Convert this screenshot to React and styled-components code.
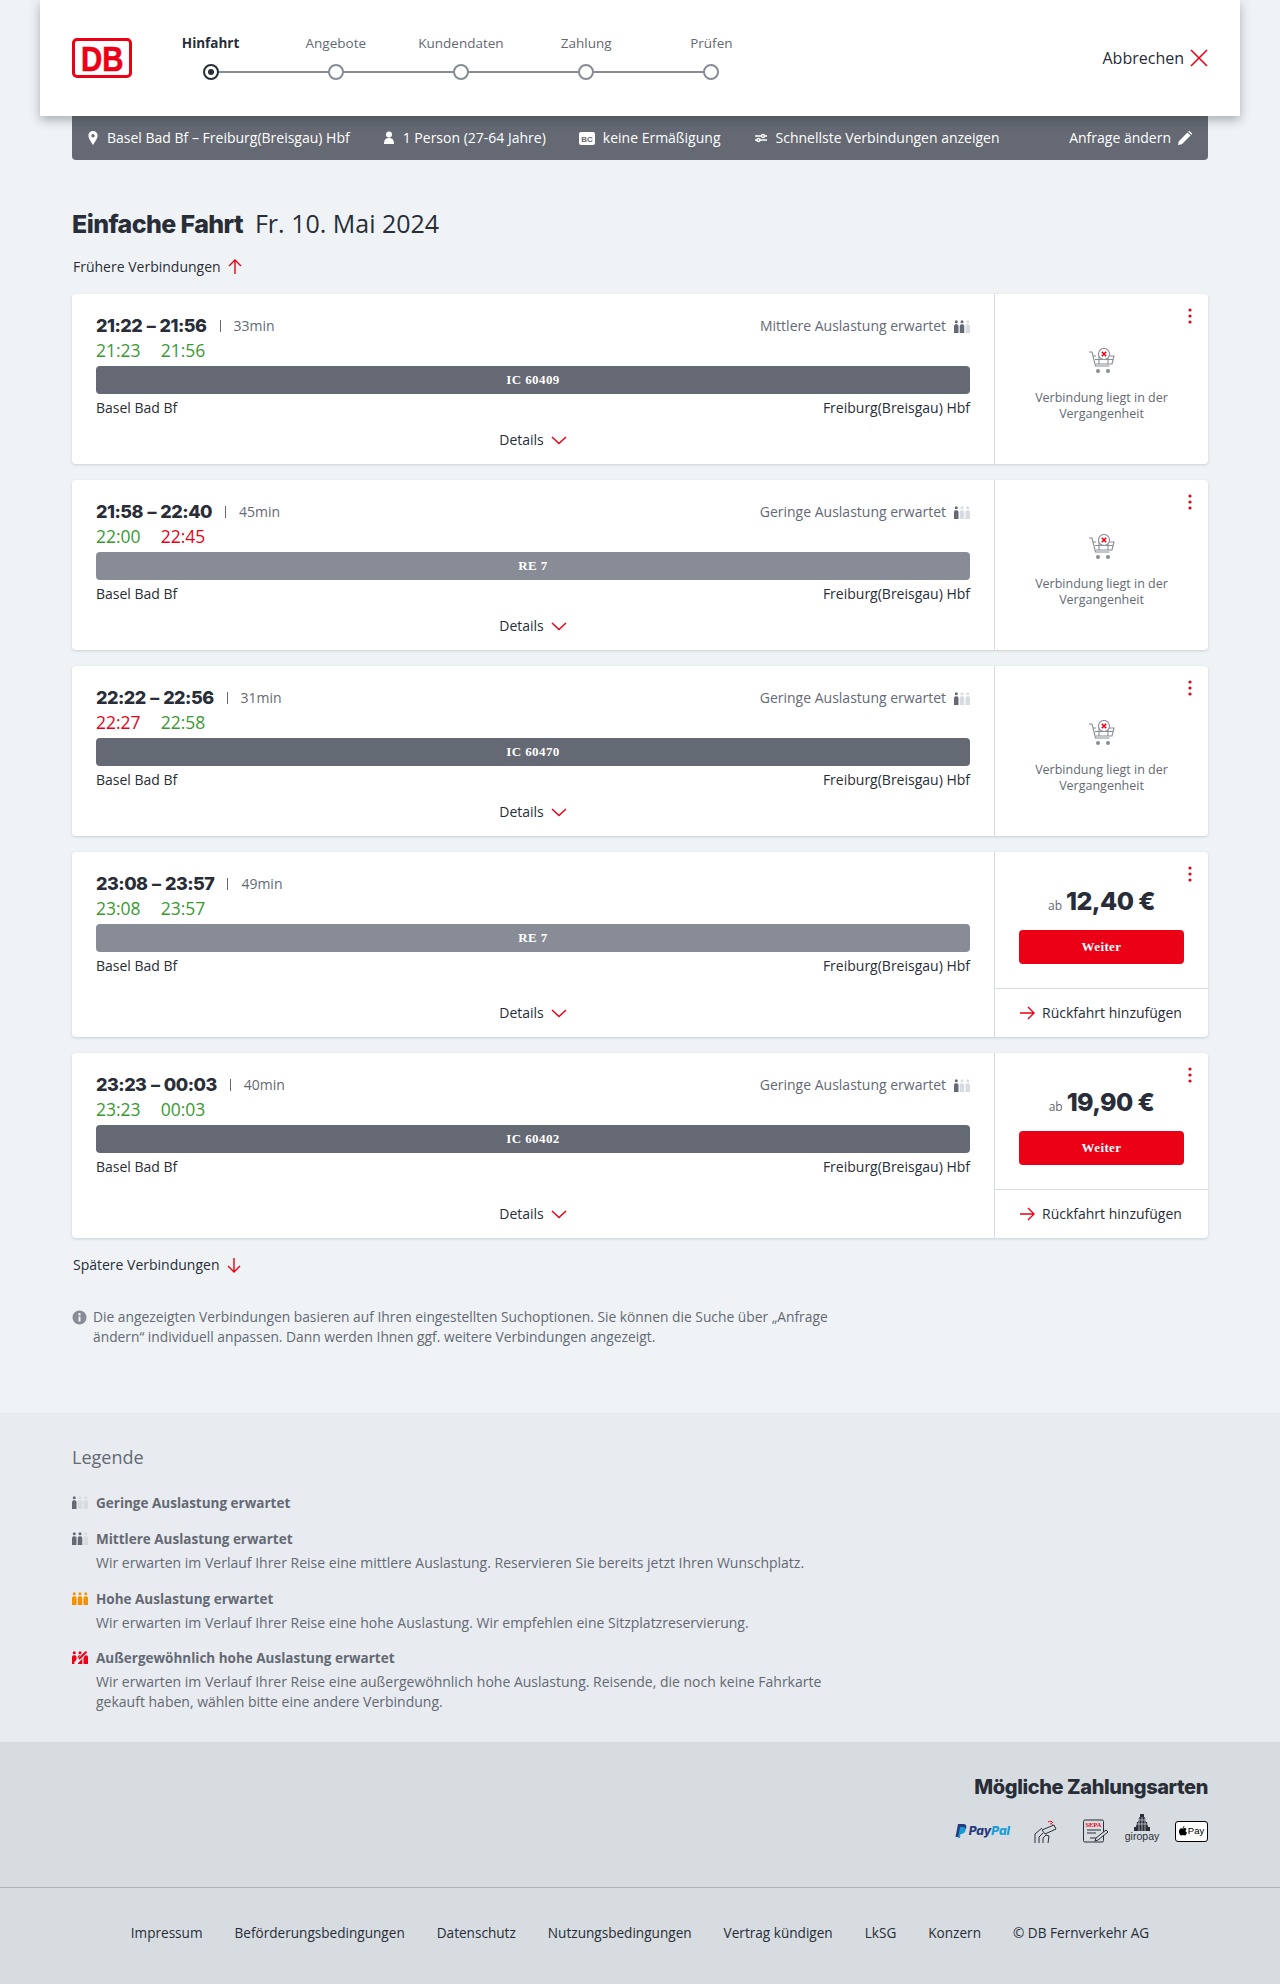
import React from "react"
import styled, { createGlobalStyle } from "styled-components"

const sans = `"Open Sans", "Noto Sans", sans-serif`
const heavy = `"Inter", "Noto Sans", sans-serif`
const slab = `"Liberation Serif", serif`

const GlobalStyle = createGlobalStyle`
  html, body { margin: 0; padding: 0; }
  body { background: #eff3f6; color: #282d37; font-family: ${sans}; font-size: 14px; line-height: 20px; }
  * { box-sizing: border-box; }
`

const Page = styled.div`
  width: 1280px;
  height: 1984px;
  overflow: hidden;
  display: flex;
  flex-direction: column;
`
const Header = styled.header`
  position: relative;
  z-index: 2;
  margin: 0 40px;
  height: 116px;
  background: #fff;
  box-shadow: 0 4px 10px rgba(40, 45, 55, 0.35);
  display: flex;
  align-items: center;
  padding: 0 32px;
`
const Logo = styled.div`
  width: 60px;
  height: 40px;
  border: 3.5px solid #ec0016;
  border-radius: 5px;
  display: flex;
  align-items: center;
  justify-content: center;
  color: #ec0016;

  span {
    font: 700 35px/1 "Liberation Sans", sans-serif;
    -webkit-text-stroke: 0.6px #ec0016;
    transform: scaleX(0.84);
  }
`
const Stepper = styled.ol`
  list-style: none;
  margin: 0 0 0 16px;
  padding: 0;
  display: flex;
`
const Step = styled.li`
  position: relative;
  width: 125.2px;
  height: 50px;
  text-align: center;
  font-size: 13.5px;
  line-height: 20px;
  font-weight: ${(p) => (p.$active ? 700 : 400)};
  color: ${(p) => (p.$active ? "#282d37" : "#646973")};

  &:not(:last-child)::before {
    content: "";
    position: absolute;
    left: 50%;
    width: 100%;
    top: 38px;
    height: 2px;
    background: #878c96;
  }
`
const StepDot = styled.span`
  position: absolute;
  left: 50%;
  top: 31px;
  width: 16px;
  height: 16px;
  margin-left: -8px;
  border-radius: 50%;
  background: #fff;
  border: 2px solid ${(p) => (p.$active ? "#282d37" : "#878c96")};

  &::after {
    content: "";
    display: ${(p) => (p.$active ? "block" : "none")};
    width: 6px;
    height: 6px;
    margin: 3px;
    border-radius: 50%;
    background: #282d37;
  }
`
const Cancel = styled.div`
  margin-left: auto;
  display: flex;
  align-items: center;
  gap: 6px;
  font-size: 16px;
  color: #282d37;
`
const Main = styled.main`
  padding: 0 72px;
  flex: 1;
`
const Summary = styled.div`
  height: 44px;
  background: #646973;
  border-radius: 0 0 4px 4px;
  color: #fff;
  font-size: 14px;
  display: flex;
  align-items: center;
  padding: 0 15px;
  gap: 33px;
`
const SummaryItem = styled.div`
  display: flex;
  align-items: center;
  gap: 8px;
`
const Change = styled(SummaryItem)`
  margin-left: auto;
  gap: 6px;
`
const Heading = styled.h1`
  margin: 47px 0 0;
  font-size: 25px;
  line-height: 32px;
  font-weight: 400;
  color: #282d37;

  strong {
    font-family: ${heavy};
    font-weight: 800;
    font-size: 25px;
    letter-spacing: -0.6px;
    margin-right: 12px;
  }
`
const MoreLink = styled.div`
  display: flex;
  align-items: center;
  gap: 6px;
  height: 20px;
  font-size: 14px;
  margin: ${(p) => p.$margin};
  padding-left: 1px;
`
const CardList = styled.div`
  display: flex;
  flex-direction: column;
  gap: 16px;
`
const Card = styled.article`
  position: relative;
  background: #fff;
  border-radius: 4px;
  box-shadow: 0 1px 3px rgba(40, 45, 55, 0.18);
  display: grid;
  grid-template-columns: 1fr 214px;
  min-height: 170px;
`
const Journey = styled.div`
  padding: 20px 24px 0;
  display: flex;
  flex-direction: column;
`
const TopRow = styled.div`
  display: flex;
  align-items: center;
  height: 24px;
`
const Times = styled.span`
  font-family: ${heavy};
  font-weight: 800;
  font-size: 18px;
  letter-spacing: -0.5px;
  word-spacing: 1px;
  color: #282d37;
`
const Duration = styled.span`
  color: #646973;
  font-size: 14px;
  margin-left: 13px;
  padding-left: 14px;
  position: relative;

  &::before {
    content: "";
    position: absolute;
    left: 0;
    top: 4px;
    width: 1px;
    height: 12px;
    background: #646973;
  }
`
const Load = styled.span`
  margin-left: auto;
  display: flex;
  align-items: center;
  gap: 8px;
  color: #646973;
  font-size: 14px;
`
const RealRow = styled.div`
  display: flex;
  gap: 20px;
  height: 24px;
  font-size: 17.5px;
  line-height: 24px;
`
const RealTime = styled.span`
  color: ${(p) => (p.$late ? "#ec0016" : "#3a9a32")};
`
const TrainBar = styled.div`
  height: 28px;
  margin-top: 4px;
  border-radius: 4px;
  background: ${(p) => (p.$light ? "#878c96" : "#646973")};
  color: #fff;
  font: 700 13px/28px ${slab};
  letter-spacing: 0.4px;
  text-align: center;
`
const Stations = styled.div`
  display: flex;
  justify-content: space-between;
  margin-top: 4px;
  height: 20px;
  font-size: 14px;
`
const Details = styled.div`
  margin-top: auto;
  height: 46px;
  padding-bottom: 2px;
  display: flex;
  align-items: center;
  justify-content: center;
  gap: 7px;
  font-size: 14px;
`
const Side = styled.aside`
  position: relative;
  border-left: 1px solid #d7dce1;
  display: flex;
  flex-direction: column;
`
const Kebab = styled.svg`
  position: absolute;
  right: 16px;
  top: 14px;
`
const Past = styled.div`
  flex: 1;
  display: flex;
  flex-direction: column;
  align-items: center;
  padding-top: 54px;
  text-align: center;
  color: #646973;
  font-size: 12.5px;
  line-height: 16px;

  p {
    margin: 14px 0 0;
    width: 150px;
  }
`
const Offer = styled.div`
  height: 136px;
  padding: 27px 24px 0;
  display: flex;
  flex-direction: column;
  align-items: center;
`
const Price = styled.div`
  display: flex;
  align-items: baseline;
  justify-content: center;
  gap: 4px;
  height: 44px;
  color: #282d37;
  font: 800 25px/44px ${heavy};
  letter-spacing: -0.6px;

  small {
    font: 400 12px ${sans};
    color: #646973;
    letter-spacing: 0;
  }
`
const Continue = styled.div`
  width: 165px;
  height: 34px;
  margin-top: 7px;
  border-radius: 4px;
  background: #ec0016;
  color: #fff;
  font: 700 13px/34px ${slab};
  letter-spacing: 0.4px;
  text-align: center;
`
const Return = styled.div`
  height: 49px;
  border-top: 1px solid #d7dce1;
  display: flex;
  align-items: center;
  gap: 7px;
  padding-left: 24px;
  font-size: 14px;
`
const Notice = styled.div`
  margin-top: 32px;
  width: 770px;
  display: flex;
  gap: 6px;
  font-size: 13.8px;
  color: #646973;

  svg { flex: none; margin-top: 3px; }
`
const Legend = styled.section`
  background: #e8ebf0;
  height: 329px;
  padding: 32px 72px 0;
  color: #646973;
`
const LegendTitle = styled.h2`
  margin: 0 0 24px;
  font-size: 18px;
  line-height: 24px;
  font-weight: 400;
`
const LegendItem = styled.div`
  display: grid;
  grid-template-columns: 24px 760px;
  margin-bottom: ${(p) => p.$gap}px;

  svg { margin-top: 3px; }
  b { display: block; font-size: 13.5px; line-height: 20px; font-weight: 700; }
  p { margin: 4px 0 0; font-size: 14px; line-height: 20px; width: 740px; }
`
const Payments = styled.section`
  background: #d7dce1;
  height: 146px;
  padding: 32px 72px 0;
  display: flex;
  flex-direction: column;
  align-items: flex-end;
  border-bottom: 1px solid #afb4bb;
`
const PaymentTitle = styled.h2`
  margin: 0;
  font: 800 20px/26px ${heavy};
  letter-spacing: -0.4px;
  color: #282d37;
`
const PaymentRow = styled.div`
  margin-top: 18px;
  display: flex;
  align-items: center;
`
const PayItem = styled.div`
  display: flex;
  margin-right: ${(p) => p.$after || 0}px;
`
const PayPal = styled(PayItem)`
  align-items: center;
  gap: 2px;
  font: italic 800 12px/1 ${heavy};
  color: #253b80;

  i { color: #179bd7; font-style: inherit; }
`
const Giro = styled(PayItem)`
  flex-direction: column;
  align-items: center;
  margin-top: -6px;
  font: 400 10.5px/11px "Liberation Sans", sans-serif;
  color: #282d37;
  width: 34px;
`
const ApplePay = styled.div`
  width: 33px;
  height: 21px;
  background: #fff;
  border: 1px solid #000;
  border-radius: 3px;
  display: flex;
  align-items: center;
  justify-content: center;
  font: 500 9.5px/1 "Liberation Sans", sans-serif;
  color: #000;
  gap: 1px;
`
const Footer = styled.footer`
  background: #d7dce1;
  height: 96px;
  padding-top: 35px;
  display: flex;
  justify-content: center;
  gap: 32px;
  font-size: 13.6px;
  color: #282d37;
`

const Arrow = ({ dir }) => {
  const rot = { up: -90, down: 90, right: 0 }[dir]
  return (
    <svg width="16" height="16" viewBox="0 0 16 16" fill="none" stroke="#ec0016" strokeWidth="1.4" style={{ transform: `rotate(${rot}deg)` }}>
      <path d="M1 8h14M9 2l6 6-6 6" />
    </svg>
  )
}

const Chevron = () => (
  <svg width="16" height="10" viewBox="0 0 16 10" fill="none" stroke="#ec0016" strokeWidth="1.5">
    <path d="M1 2l7 6.5L15 2" />
  </svg>
)

const person = (x, color) => (
  <g fill={color} key={x}>
    <circle cx={x + 2.250} cy="1.800" r="1.500" />
    <path d={`M${x} 6a1.800 1.800 0 0 1 1.800-1.800h.9A1.800 1.800 0 0 1 ${x + 4.500} 6V13h-4.500z`} />
  </g>
)

// level: 1-3 filled people, colour by level
const Occupancy = ({ level, color = "#646973" }) => (
  <svg width="16" height="13" viewBox="0 0 16 13">
    {[0, 5.750, 11.500].map((x, i) => person(x, i < level ? color : "#d7dce1"))}
  </svg>
)

const OccupancyFull = () => (
  <svg width="16" height="13" viewBox="0 0 16 13">
    {[0, 5.750, 11.500].map((x) => person(x, "#ec0016"))}
    <path d="M3 13L14 1" stroke="#e8ebf0" strokeWidth="3.500" />
    <path d="M7 8l7-7" stroke="#ec0016" strokeWidth="2" />
  </svg>
)

const Cart = () => (
  <svg width="28" height="28" viewBox="0 0 28 28" fill="none" stroke="#878c96" strokeWidth="1.100">
    <path d="M1 4h3l3.500 14h14" />
    <path d="M5 8h3M20 8h6l-2 8H8" />
    <path d="M7 11.500h18M11 8v8M20 8v8" />
    <circle cx="16" cy="6" r="5.500" fill="#fff" />
    <path d="M13.800 3.800l4.400 4.400M18.200 3.800l-4.400 4.400" stroke="#ec0016" strokeWidth="1.600" />
    <circle cx="10" cy="23" r="2" fill="#878c96" stroke="none" />
    <circle cx="20" cy="23" r="2" fill="#878c96" stroke="none" />
  </svg>
)

const connections = [
  { times: "21:22 – 21:56", dur: "33min", dep: ["21:23"], arr: ["21:56"], train: "IC 60409", load: "Mittlere", level: 2, past: true },
  { times: "21:58 – 22:40", dur: "45min", dep: ["22:00"], arr: ["22:45", true], train: "RE 7", light: true, load: "Geringe", level: 1, past: true },
  { times: "22:22 – 22:56", dur: "31min", dep: ["22:27", true], arr: ["22:58"], train: "IC 60470", load: "Geringe", level: 1, past: true },
  { times: "23:08 – 23:57", dur: "49min", dep: ["23:08"], arr: ["23:57"], train: "RE 7", light: true, price: "12,40 €" },
  { times: "23:23 – 00:03", dur: "40min", dep: ["23:23"], arr: ["00:03"], train: "IC 60402", load: "Geringe", level: 1, price: "19,90 €" },
]

const Connection = ({ c }) => (
  <Card>
    <Journey>
      <TopRow>
        <Times>{c.times}</Times>
        <Duration>{c.dur}</Duration>
        {c.load && (
          <Load>
            {c.load} Auslastung erwartet
            <Occupancy level={c.level} />
          </Load>
        )}
      </TopRow>
      <RealRow>
        <RealTime $late={c.dep[1]}>{c.dep[0]}</RealTime>
        <RealTime $late={c.arr[1]}>{c.arr[0]}</RealTime>
      </RealRow>
      <TrainBar $light={c.light}>{c.train}</TrainBar>
      <Stations>
        <span>Basel Bad Bf</span>
        <span>Freiburg(Breisgau) Hbf</span>
      </Stations>
      <Details>
        Details
        <Chevron />
      </Details>
    </Journey>
    <Side>
      <Kebab width="4" height="16" viewBox="0 0 4 16" fill="#ec0016">
        <circle cx="2" cy="2" r="1.600" />
        <circle cx="2" cy="8" r="1.600" />
        <circle cx="2" cy="14" r="1.600" />
      </Kebab>
      {c.past ? (
        <Past>
          <Cart />
          <p>Verbindung liegt in der Vergangenheit</p>
        </Past>
      ) : (
        <>
          <Offer>
            <Price>
              <small>ab</small>
              {c.price}
            </Price>
            <Continue>Weiter</Continue>
          </Offer>
          <Return>
            <Arrow dir="right" />
            Rückfahrt hinzufügen
          </Return>
        </>
      )}
    </Side>
  </Card>
)

const steps = ["Hinfahrt", "Angebote", "Kundendaten", "Zahlung", "Prüfen"]
const footerLinks = ["Impressum", "Beförderungsbedingungen", "Datenschutz", "Nutzungsbedingungen", "Vertrag kündigen", "LkSG", "Konzern", "© DB Fernverkehr AG"]

const App = () => (
  <Page>
    <GlobalStyle />
    <Header>
      <Logo>
        <span>DB</span>
      </Logo>
      <Stepper>
        {steps.map((s, i) => (
          <Step key={s} $active={i === 0}>
            {s}
            <StepDot $active={i === 0} />
          </Step>
        ))}
      </Stepper>
      <Cancel>
        Abbrechen
        <svg width="18" height="18" viewBox="0 0 18 18" fill="none" stroke="#ec0016" strokeWidth="1.600">
          <path d="M1 1l16 16M17 1L1 17" />
        </svg>
      </Cancel>
    </Header>
    <Main>
      <Summary>
        <SummaryItem>
          <svg width="12" height="16" viewBox="0 0 12 16" fill="#fff">
            <path fillRule="evenodd" d="M6 1a4.600 4.600 0 0 0-4.600 4.600C1.400 9 6 15 6 15s4.600-6 4.600-9.400A4.600 4.600 0 0 0 6 1zm0 3a1.700 1.700 0 1 1 0 3.400A1.700 1.700 0 0 1 6 4z" />
          </svg>
          Basel Bad Bf – Freiburg(Breisgau) Hbf
        </SummaryItem>
        <SummaryItem>
          <svg width="12" height="14" viewBox="0 0 12 14" fill="#fff">
            <circle cx="6" cy="3.500" r="3" />
            <path d="M1 13c0-4 1.500-6 5-6s5 2 5 6z" />
          </svg>
          1 Person (27-64 Jahre)
        </SummaryItem>
        <SummaryItem>
          <svg width="16" height="13" viewBox="0 0 16 13">
            <rect width="16" height="13" rx="2" fill="#fff" />
            <text x="8" y="9.500" textAnchor="middle" fontSize="8" fontWeight="700" fontFamily="Liberation Sans" fill="#646973">BC</text>
          </svg>
          keine Ermäßigung
        </SummaryItem>
        <SummaryItem>
          <svg width="14" height="12" viewBox="0 0 14 12" fill="none" stroke="#fff" strokeWidth="1.400">
            <path d="M1 4h12M1 8h12" />
            <circle cx="9" cy="4" r="1.500" fill="#646973" />
            <circle cx="4.500" cy="8" r="1.500" fill="#646973" />
          </svg>
          Schnellste Verbindungen anzeigen
        </SummaryItem>
        <Change>
          Anfrage ändern
          <svg width="16" height="16" viewBox="0 0 16 16" fill="#fff">
            <path d="M1 15l.8-3.800L10.500 2.500l3 3L4.800 14.200zM11.300 1.700l1-1 3 3-1 1z" />
          </svg>
        </Change>
      </Summary>
      <Heading>
        <strong>Einfache Fahrt</strong>Fr. 10. Mai 2024
      </Heading>
      <MoreLink $margin="17px 0 17px">
        Frühere Verbindungen
        <Arrow dir="up" />
      </MoreLink>
      <CardList>
        {connections.map((c) => (
          <Connection key={c.times} c={c} />
        ))}
      </CardList>
      <MoreLink $margin="17px 0 0">
        Spätere Verbindungen
        <Arrow dir="down" />
      </MoreLink>
      <Notice>
        <svg width="15" height="15" viewBox="0 0 15 15">
          <circle cx="7.500" cy="7.500" r="7" fill="#878c96" />
          <rect x="6.500" y="6.500" width="2" height="5" fill="#eff3f6" />
          <circle cx="7.500" cy="4.300" r="1.200" fill="#eff3f6" />
        </svg>
        <span>
          Die angezeigten Verbindungen basieren auf Ihren eingestellten Suchoptionen. Sie können die Suche über „Anfrage
          ändern“ individuell anpassen. Dann werden Ihnen ggf. weitere Verbindungen angezeigt.
        </span>
      </Notice>
    </Main>
    <Legend>
      <LegendTitle>Legende</LegendTitle>
      <LegendItem $gap={16}>
        <Occupancy level={1} />
        <b>Geringe Auslastung erwartet</b>
      </LegendItem>
      <LegendItem $gap={16}>
        <Occupancy level={2} />
        <div>
          <b>Mittlere Auslastung erwartet</b>
          <p>Wir erwarten im Verlauf Ihrer Reise eine mittlere Auslastung. Reservieren Sie bereits jetzt Ihren Wunschplatz.</p>
        </div>
      </LegendItem>
      <LegendItem $gap={15}>
        <Occupancy level={3} color="#f39200" />
        <div>
          <b>Hohe Auslastung erwartet</b>
          <p>Wir erwarten im Verlauf Ihrer Reise eine hohe Auslastung. Wir empfehlen eine Sitzplatzreservierung.</p>
        </div>
      </LegendItem>
      <LegendItem $gap={0}>
        <OccupancyFull />
        <div>
          <b>Außergewöhnlich hohe Auslastung erwartet</b>
          <p>
            Wir erwarten im Verlauf Ihrer Reise eine außergewöhnlich hohe Auslastung. Reisende, die noch keine Fahrkarte
            gekauft haben, wählen bitte eine andere Verbindung.
          </p>
        </div>
      </LegendItem>
    </Legend>
    <Payments>
      <PaymentTitle>Mögliche Zahlungsarten</PaymentTitle>
      <PaymentRow>
        <PayPal $after={23}>
          <svg width="12" height="14" viewBox="0 0 12 14">
            <path d="M3 0h5c3 0 4 2 3 4.500S8 8 6 8H4.500L3.700 13H0.500z" fill="#253b80" />
            <path d="M5 3h3c2 0 3 1.500 2.500 3.500S8 10 6.500 10H5.500L5 14H3z" fill="#179bd7" />
          </svg>
          <span>
            Pay<i>Pal</i>
          </span>
        </PayPal>
        <PayItem $after={26}>
          <svg width="24" height="26" viewBox="0 0 24 26" fill="none" stroke="#282d37" strokeWidth="1">
            <path d="M9 12l12-5 2 4-11 5z" />
            <path d="M2 25v-9l7-6M6 25v-6l4-4M10 25v-5l3-3 3 1-1 7" />
            <path d="M15 4c2-1 4-1 5 1M17 6c1-.5 2-.5 2.500.5" stroke="#ec0016" />
          </svg>
        </PayItem>
        <PayItem $after={16}>
          <svg width="26" height="24" viewBox="0 0 26 24" fill="none" stroke="#282d37" strokeWidth="1">
            <rect x="0.500" y="1" width="20" height="22" rx="1.500" />
            <text x="10.500" y="8" textAnchor="middle" fontSize="6.500" fontWeight="700" fontFamily="Liberation Serif" fill="#ec0016" stroke="none">SEPA</text>
            <path d="M4 11h14M4 14h9M7 19h6" />
            <path d="M13 19l10-8 2 2-10 8-3 1z" fill="#d7dce1" />
          </svg>
        </PayItem>
        <Giro $after={16}>
          <svg width="16" height="17" viewBox="0 0 16 17" fill="#282d37">
            <path d="M6 0h4v3h1l1 5h1l1 5h2v4H0v-4h2l1-5h1l1-5h1z" />
            <path d="M0 6h16M0 10h16M5 3v14M8 3v14M11 3v14" stroke="#d7dce1" strokeWidth="0.700" />
          </svg>
          giropay
        </Giro>
        <ApplePay>
          <svg width="8" height="10" viewBox="0 0 8 10" fill="#000">
            <path d="M5.500 0c0 1-.8 2-1.800 2C3.700 1 4.500.2 5.500 0zM4 2.500c.6 0 1-.4 1.800-.4.700 0 1.400.4 1.800 1-1.500.9-1.200 3 .4 3.600C7.500 8 6.700 9.500 5.800 9.500c-.7 0-1-.4-1.800-.4s-1.100.4-1.800.4C1 9.500 0 7.200 0 5.500 0 3.500 1.200 2.200 2.400 2.200c.6 0 1.100.3 1.600.3z" />
          </svg>
          Pay
        </ApplePay>
      </PaymentRow>
    </Payments>
    <Footer>
      {footerLinks.map((l) => (
        <span key={l}>{l}</span>
      ))}
    </Footer>
  </Page>
)

export default App
